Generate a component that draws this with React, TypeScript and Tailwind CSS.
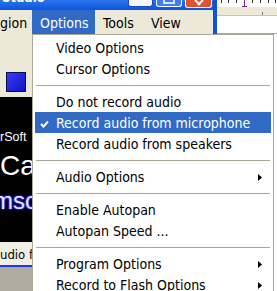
const menuFont = { fontFamily: '"DejaVu Sans Condensed", "DejaVu Sans", sans-serif' }

type Entry =
  | { kind: 'item'; label: string; checked?: boolean; sub?: boolean; active?: boolean }
  | { kind: 'sep' }

const entries: Entry[] = [
  { kind: 'item', label: 'Video Options' },
  { kind: 'item', label: 'Cursor Options' },
  { kind: 'sep' },
  { kind: 'item', label: 'Do not record audio' },
  { kind: 'item', label: 'Record audio from microphone', checked: true, active: true },
  { kind: 'item', label: 'Record audio from speakers' },
  { kind: 'sep' },
  { kind: 'item', label: 'Audio Options', sub: true },
  { kind: 'sep' },
  { kind: 'item', label: 'Enable Autopan' },
  { kind: 'item', label: 'Autopan Speed ...' },
  { kind: 'sep' },
  { kind: 'item', label: 'Program Options', sub: true },
  { kind: 'item', label: 'Record to Flash Options', sub: true },
]

const Check = () => (
  <svg width="9" height="8" viewBox="0 0 9 8">
    <path d="M1 4 L3.5 6.5 L8 1.5" fill="none" stroke="white" strokeWidth="2" />
  </svg>
)

const Arrow = () => (
  <svg width="4" height="7" viewBox="0 0 4 7">
    <polygon points="0,0 4,3.5 0,7" fill="black" />
  </svg>
)

const Ruler = () => (
  <svg width="60" height="7" viewBox="0 0 60 7">
    {[4, 11, 19, 35, 43, 51, 58].map((x) => (
      <line key={x} x1={x + 0.5} y1="0" x2={x + 0.5} y2="3" stroke="#333" strokeWidth="1" />
    ))}
    <line x1="27.5" y1="0" x2="27.5" y2="6" stroke="#7a2a8a" strokeWidth="1" />
    <line x1="25" y1="6.5" x2="30" y2="6.5" stroke="#7a2a8a" strokeWidth="1" />
  </svg>
)

const App = () => {
  return (
    <div className="w-[277px] h-[291px] overflow-hidden flex flex-col bg-white" style={menuFont}>
      {/* window top: title bar + menu bar */}
      <div className="flex h-[34px] shrink-0">
        <div className="w-[217px] flex flex-col border-r-[4px] border-[#0f52d8]">
          <div className="h-[10px] flex bg-gradient-to-b from-[#2a74ec] to-[#0a55d9] overflow-hidden">
            <div className="w-[128px] overflow-hidden">
              <div className="-mt-[9px] pl-[2px] text-[13px] font-bold leading-none text-white">
                Studio
              </div>
            </div>
            <div className="w-[25px] h-[7px] rounded-b-[3px] border border-t-0 border-[#1c48c0] bg-[#f3f6fd]" />
            <div className="ml-[3px] w-[26px] h-[7px] rounded-b-[3px] border border-t-0 border-white bg-[#3f7ef2] flex justify-center">
              <div className="w-[12px] h-[4px] border-x-2 border-b-2 border-white/80" />
            </div>
            <div className="ml-[3px] w-[27px] h-[8px] rounded-b-[3px] border border-t-0 border-white bg-[#e0512e] flex justify-center">
              <svg width="12" height="6" viewBox="0 0 12 6">
                <path d="M2 0 L7 5 M10 0 L5 5" stroke="white" strokeWidth="2" />
              </svg>
            </div>
          </div>
          <div className="flex-1 flex bg-[#ece9d8] text-[14px] text-black">
            <div className="w-[32px] flex items-center pt-[2px] overflow-hidden whitespace-nowrap">gion</div>
            <div className="w-[63px] flex items-center pt-[2px] pl-[8px] bg-[#316ac5] text-white">Options</div>
            <div className="w-[48px] flex items-center pt-[2px] pl-[8px]">Tools</div>
            <div className="flex items-center pt-[2px] pl-[8px]">View</div>
          </div>
        </div>
        <div className="flex-1 flex flex-col">
          <Ruler />
          <div className="h-[8px] bg-[#ece9d8] flex">
            <div className="ml-[45px] mt-[5px] w-px h-[3px] bg-[#777]" />
          </div>
          <div className="h-px bg-[#c8c6bc]" />
          <div className="flex-1 bg-white" />
          <div className="h-px bg-[#aca899]" />
        </div>
      </div>

      <div className="flex-1 flex min-h-0 overflow-hidden">
        {/* application window peeking out on the left */}
        <div className="w-[32px] flex flex-col overflow-hidden" style={{ fontFamily: '"Liberation Sans", Arial, sans-serif' }}>
          <div className="h-[63px] shrink-0 bg-[#ece9d8] pt-[38px] pl-[6px]">
            <div className="w-[20px] h-[20px] border border-[#0c0c50] bg-gradient-to-br from-[#3a3aff] to-[#1010c0]" />
          </div>
          <div className="h-[145px] shrink-0 bg-black flex flex-col text-white whitespace-nowrap">
            <div className="mt-[34px] text-[12.5px] leading-none">rSoft</div>
            <div className="mt-[8px] text-[28px] leading-none">Ca</div>
            <div className="mt-[9px] -ml-[7px] text-[24px] leading-none text-[#e4e4ff] [text-shadow:0_0_2px_#2a2aff,0_0_2px_#2a2aff,0_0_3px_#2a2aff]">
              msc
            </div>
          </div>
          <div className="h-[23px] shrink-0 bg-[#f1efe4] flex items-center pt-[2px] text-[13px] text-black whitespace-nowrap" style={menuFont}>
            udio f
          </div>
          <div className="h-[2px] shrink-0 bg-[#1c3ee0]" />
          <div className="flex-1 bg-[#aeaba0]" />
        </div>

        {/* Options dropdown */}
        <div className="w-[242px] border-x border-t border-[#aca899] bg-white pt-[2px] px-[2px] text-[14px] text-black">
          {entries.map((e, i) =>
            e.kind === 'sep' ? (
              <div key={i} className="h-[12px] flex items-center px-[1px]">
                <div className="h-px w-full bg-[#aca899]" />
              </div>
            ) : (
              <div
                key={i}
                className={`h-[21px] pt-[2px] flex items-center whitespace-nowrap ${e.active ? 'bg-[#316ac5] text-white' : ''}`}
              >
                <div className="w-[21px] flex justify-center pr-[2px]">{e.checked && <Check />}</div>
                <div className="flex-1">{e.label}</div>
                <div className="w-[13px]">{e.sub && <Arrow />}</div>
              </div>
            )
          )}
        </div>

        <div className="flex-1 bg-white" />
      </div>
    </div>
  )
}

export default App
